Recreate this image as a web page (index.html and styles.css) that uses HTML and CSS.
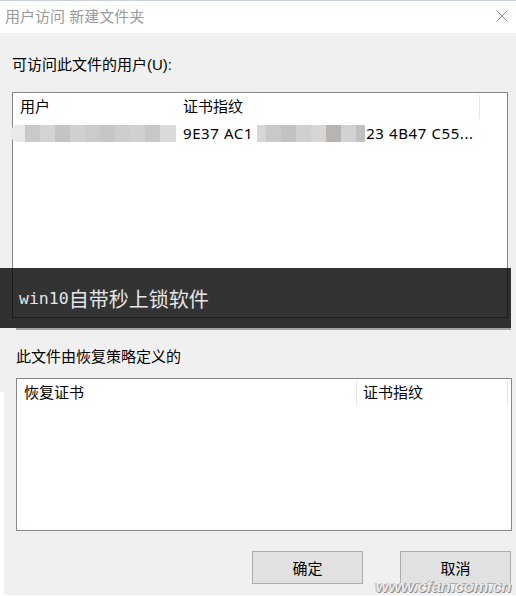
FILE: index.html
```html
<!DOCTYPE html>
<html>
<head>
  <meta charset="UTF-8">
  <title>用户访问 新建文件夹</title>
  <link rel="stylesheet" href="styles.css">
</head>
<body>
  <div class="titlebar">
    <span class="title">用户访问 新建文件夹</span>
    <svg class="close" width="12" height="12" viewBox="0 0 12 12">
      <path d="M0.5 0.5 L11.5 11.5 M11.5 0.5 L0.5 11.5" stroke="#8a8a8a" stroke-width="1" fill="none"/>
    </svg>
  </div>

  <div class="upper">
    <div class="label">可访问此文件的用户(U):</div>
    <div class="listbox top-list">
      <div class="list-head">
        <div class="col user">用户</div>
        <div class="col thumb">证书指纹</div>
        <div class="col rest"></div>
      </div>
      <div class="list-row">
        <div class="mosaic m1"></div>
        <div class="cell-thumb"><span>9E37 AC1</span><span class="mosaic m2"></span><span>23 4B47 C55...</span></div>
      </div>
    </div>
  </div>

  <div class="divider"></div>

  <div class="lower">
    <div class="label">此文件由恢复策略定义的</div>
    <div class="listbox bottom-list">
      <div class="list-head">
        <div class="col cert">恢复证书</div>
        <div class="col thumb2">证书指纹</div>
        <div class="col rest"></div>
      </div>
    </div>
    <div class="buttons">
      <div class="btn">确定</div>
      <div class="btn">取消</div>
    </div>
  </div>

  <div class="banner"><span class="latin">win10</span>自带秒上锁软件</div>
  <div class="watermark">www.cfan.com.cn</div>
</body>
</html>
```

FILE: styles.css
```css
html { background: #fff; }
body {
  margin: 0;
  width: 516px;
  position: relative;
  background: #f0f0f0;
  font-family: "Segoe UI", "Liberation Sans", "Noto Sans CJK SC", sans-serif;
  font-size: 15px;
  color: #000;
}

.titlebar {
  height: 32px;
  border-top: 1px solid #c9d1dc;
  background: #fff;
  display: flex;
  align-items: center;
  justify-content: space-between;
  padding: 0 8px 0 5px;
}
.title { color: #9a9a9a; line-height: 20px; margin-top: -1px; }
.close { margin-top: -2px; }

.upper { padding: 22px 8px 10px 12px; }
.label { line-height: 20px; height: 20px; }
.upper .label { margin-bottom: 17px; }

.listbox {
  box-sizing: border-box;
  width: 496px;
  border: 1px solid #828790;
  background: #fff;
}
.top-list { height: 226px; }
.bottom-list { height: 153px; }

.list-head { display: flex; height: 27px; align-items: center; }
.col { line-height: 20px; box-sizing: border-box; }
.col.user { width: 170px; padding-left: 7px; }
.col.thumb { width: 296px; }
.col.rest { height: 24px; border-left: 1px solid #e5e5e5; }
.col.cert { width: 339px; padding-left: 7px; }
.col.thumb2 { width: 151px; height: 24px; padding-left: 6px; border-left: 1px solid #e5e5e5; line-height: 24px; }

.list-row { display: flex; align-items: center; margin-top: 3px; height: 20px; }
.mosaic { display: inline-block; height: 17px; }
.m1 {
  width: 166px;
  margin-left: -3px;
  border-radius: 9px 0 0 9px;
  background: linear-gradient(to right,
    #e9e9e9 0 15px, #c9c9c9 15px 30px, #d3d3d3 30px 45px, #c4c4c4 45px 60px,
    #d0d0d0 60px 75px, #cbcbcb 75px 90px, #c6c6c6 90px 105px, #cdcdcd 105px 120px,
    #d0d0d0 120px 135px, #c7c7c7 135px 150px, #dadada 150px 166px);
}
.cell-thumb {
  display: flex;
  align-items: center;
  margin-left: 7px;
  line-height: 20px;
  white-space: nowrap;
  font-family: "Noto Sans", "Noto Sans CJK SC", sans-serif;
  font-size: 15px;
  letter-spacing: 0.6px;
}
.m2 {
  width: 108px;
  margin: 0 1px 0 4px;
  background: linear-gradient(to right,
    #d6d6d6 0 9px, #c9c9c9 9px 24px, #c2c2c2 24px 39px, #d0d0d0 39px 54px,
    #d6d6d6 54px 69px, #b8b4b2 69px 84px, #d2d2d2 84px 99px, #c0c0c0 99px 108px);
}

.divider { height: 2px; margin: 0 5px 0 16px; background: #a3a3a3; }

.lower {
  height: 265px;
  box-sizing: border-box;
  padding: 17px 0 0 16px;
  background: #f0f0f0 linear-gradient(to right, #fff 4px, transparent 4px) no-repeat 0 62px / 100% 100%;
}
.lower .label { margin-bottom: 11px; }

.buttons { display: flex; justify-content: flex-end; gap: 37px; margin-top: 20px; padding-right: 5px; }
.btn {
  box-sizing: border-box;
  width: 111px;
  height: 33px;
  border: 1px solid #adadad;
  background: #e1e1e1;
  display: flex;
  align-items: center;
  justify-content: center;
}

.banner {
  position: absolute;
  top: 268px;
  left: 0;
  width: 511px;
  height: 60px;
  background: rgba(0, 0, 0, 0.8);
  color: #e6e6e6;
  display: flex;
  align-items: center;
  padding-left: 19px;
  box-sizing: border-box;
  font-family: "Noto Sans CJK SC", sans-serif;
  font-size: 20px;
}
.banner .latin { font-family: "DejaVu Sans Mono", monospace; font-size: 16.5px; }

.watermark {
  position: absolute;
  top: 577px;
  right: 5px;
  font-family: "Liberation Sans", sans-serif;
  font-size: 17px;
  font-weight: bold;
  font-style: italic;
  letter-spacing: -0.5px;
  color: #e8e8e8;
  text-shadow: 1px 1px 0 #8c8c8c, -1px 0 0 #b0b0b0;
  line-height: 19px;
}
```
